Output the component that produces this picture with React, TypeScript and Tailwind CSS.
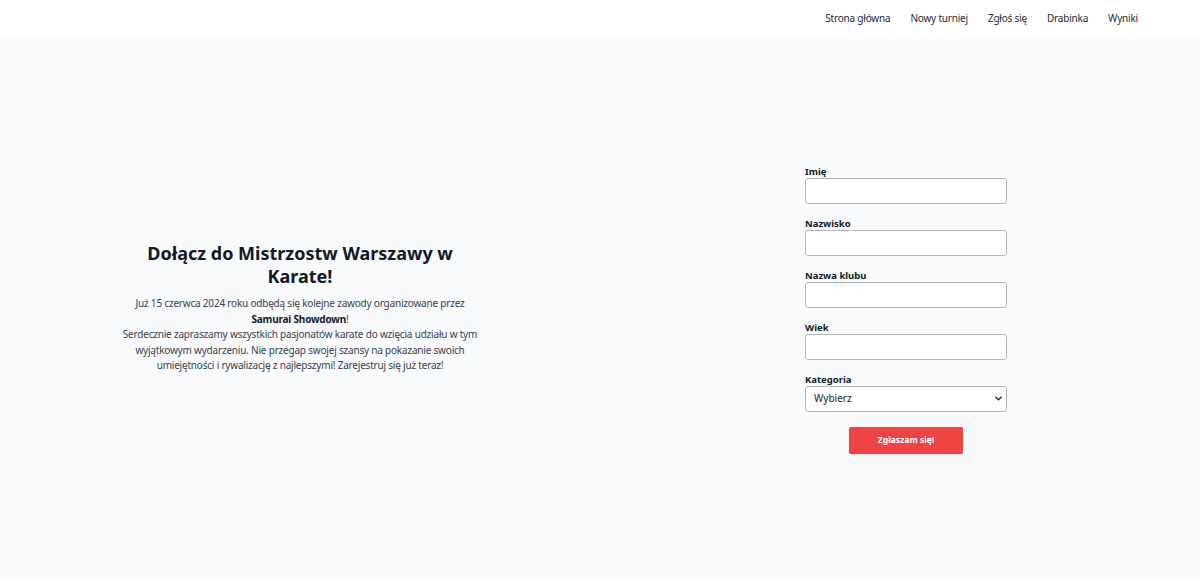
import React from 'react';

const navItems = ['Strona główna', 'Nowy turniej', 'Zgłoś się', 'Drabinka', 'Wyniki'];

const fields = ['Imię', 'Nazwisko', 'Nazwa klubu', 'Wiek'];

const App: React.FC = () => {
  return (
    <div className="min-h-[586px] flex flex-col bg-white text-[#111827]" style={{ fontFamily: '"Noto Sans", "Open Sans", sans-serif' }}>
      <header className="h-[36px] bg-white flex items-center justify-end pr-[62px]">
        <nav className="flex gap-[20px] text-[10px] tracking-[-0.2px] text-[#1f2937]">
          {navItems.map((item) => (
            <a key={item} href="#" className="hover:text-red-500">
              {item}
            </a>
          ))}
        </nav>
      </header>

      <main className="h-[544px] bg-[#f9fafb] grid grid-cols-2 items-center">
        {/* opis turnieju */}
        <section className="flex justify-center">
          <div className="w-[358px] text-center">
            <h1 className="text-[18px] leading-[23px] font-bold text-[#111827]">
              Dołącz do Mistrzostw Warszawy w Karate!
            </h1>
            <p className="mt-[8px] text-[10px] tracking-[-0.2px] leading-[15.5px] text-[#374151]">
              Już 15 czerwca 2024 roku odbędą się kolejne zawody organizowane przez{' '}
              <span className="font-bold text-[#111827]">Samurai Showdown</span>!
              <br />
              Serdecznie zapraszamy wszystkich pasjonatów karate do wzięcia udziału w tym
              wyjątkowym wydarzeniu. Nie przegap swojej szansy na pokazanie swoich
              umiejętności i rywalizację z najlepszymi! Zarejestruj się już teraz!
            </p>
          </div>
        </section>

        {/* formularz */}
        <section className="flex justify-center pl-[12px] pt-[2px]">
          <form className="w-[202px] flex flex-col" onSubmit={(e) => e.preventDefault()}>
            {fields.map((label) => (
              <div key={label} className="mb-[13px]">
                <label className="block text-[9.5px] leading-[13px] font-bold text-[#111827]">{label}</label>
                <input
                  type="text"
                  className="block w-full h-[26px] bg-white border border-[#b5b5b5] rounded-[3px] px-2 text-[11px] outline-none"
                />
              </div>
            ))}
            <div className="mb-[15px]">
              <label className="block text-[9.5px] leading-[13px] font-bold text-[#111827]">Kategoria</label>
              <div className="relative">
                <select className="block w-full h-[26px] appearance-none bg-white border border-[#b5b5b5] rounded-[3px] pl-[8px] text-[10px] text-[#222] outline-none">
                  <option>Wybierz</option>
                </select>
                <svg className="absolute right-[5px] top-[10px] w-[7px] h-[5px] pointer-events-none" viewBox="0 0 8 5" fill="none">
                  <path d="M1 1l3 3 3-3" stroke="#222" strokeWidth="1.5" strokeLinecap="round" strokeLinejoin="round" />
                </svg>
              </div>
            </div>
            <button
              type="submit"
              className="self-center w-[114px] h-[27px] bg-[#ef4444] rounded-[2px] text-white text-[8.5px] font-bold shadow-sm"
            >
              Zgłaszam się!
            </button>
          </form>
        </section>
      </main>
    </div>
  );
};

export default App;
